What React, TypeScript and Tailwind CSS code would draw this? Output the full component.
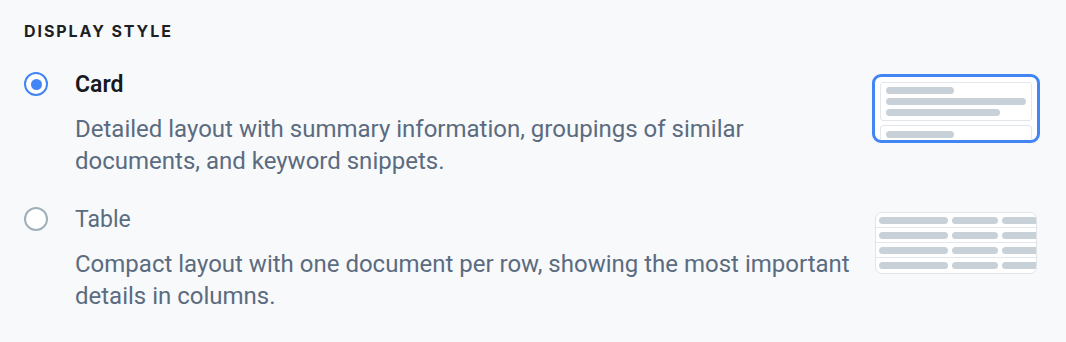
import { useState } from 'react';

type Style = 'card' | 'table';

const OPTIONS: { value: Style; label: string; description: string }[] = [
  {
    value: 'card',
    label: 'Card',
    description:
      'Detailed layout with summary information, groupings of similar documents, and keyword snippets.',
  },
  {
    value: 'table',
    label: 'Table',
    description:
      'Compact layout with one document per row, showing the most important details in columns.',
  },
];

function CardPreview() {
  return (
    <div className="mt-[3px] flex h-[69px] w-[168px] flex-col gap-1 overflow-hidden rounded-[9px] border-[3px] border-[#4285f4] bg-white p-[5px]">
      <div className="flex shrink-0 flex-col gap-1 rounded-[3px] border border-[#e3e6ea] px-[5px] py-1">
        <div className="h-[7px] w-[68px] rounded-full bg-[#c9d1d8]" />
        <div className="h-[7px] w-full rounded-full bg-[#c9d1d8]" />
        <div className="h-[7px] w-[114px] rounded-full bg-[#c9d1d8]" />
      </div>
      <div className="flex shrink-0 flex-col gap-1 rounded-[3px] border border-[#e3e6ea] px-[5px] py-[5px]">
        <div className="h-[7px] w-[68px] rounded-full bg-[#c9d1d8]" />
        <div className="h-[7px] w-[114px] rounded-full bg-[#c9d1d8]" />
      </div>
    </div>
  );
}

function TablePreview() {
  return (
    <div className="mx-[3px] mt-[6px] flex w-[162px] flex-col divide-y divide-[#e3e7eb] overflow-hidden rounded-[7px] border border-[#e1e5e9] bg-white">
      {[0, 1, 2, 3].map((row) => (
        <div key={row} className="flex h-[15px] shrink-0 items-center gap-1 pl-[3px]">
          <div className="h-[7px] w-[69px] shrink-0 rounded-full bg-[#c9d1d8]" />
          <div className="h-[7px] w-[46px] shrink-0 rounded-full bg-[#c9d1d8]" />
          <div className="h-[7px] w-[46px] shrink-0 rounded-full bg-[#c9d1d8]" />
        </div>
      ))}
    </div>
  );
}

export default function App() {
  const [style, setStyle] = useState<Style>('card');

  return (
    <div className="min-h-screen bg-[#f8f9fb] pl-6 pr-[26px] pt-[19px] font-['Roboto',sans-serif]">
      <h2 className="font-['Inter',sans-serif] text-base font-bold uppercase leading-6 tracking-[0.12em] text-[#1c1f24]">
        Display style
      </h2>

      <div className="mt-[28px] flex flex-col gap-[29px]">
        {OPTIONS.map((opt) => {
          const selected = style === opt.value;
          return (
            <label key={opt.value} className="flex cursor-pointer items-start">
              <input
                type="radio"
                name="display-style"
                value={opt.value}
                checked={selected}
                onChange={() => setStyle(opt.value)}
                className="sr-only"
              />
              {/* Radio circle */}
              <span
                className={`mt-px flex h-6 w-6 shrink-0 items-center justify-center rounded-full border-2 bg-white ${
                  selected ? 'border-[#4285f4]' : 'border-[#9fb0ba]'
                }`}
              >
                {selected && <span className="h-[11px] w-[11px] rounded-full bg-[#4285f4]" />}
              </span>

              <div className="ml-[27px] flex-1">
                <div
                  className={`text-[23px] leading-7 ${
                    selected ? 'font-semibold text-[#16191d]' : 'text-[#5b6b80]'
                  }`}
                >
                  {opt.label}
                </div>
                <p className="mt-[14px] text-2xl leading-8 text-[#5b6b80]">{opt.description}</p>
              </div>

              <div className="ml-5 w-[168px] shrink-0">
                {opt.value === 'card' ? <CardPreview /> : <TablePreview />}
              </div>
            </label>
          );
        })}
      </div>
    </div>
  );
}
